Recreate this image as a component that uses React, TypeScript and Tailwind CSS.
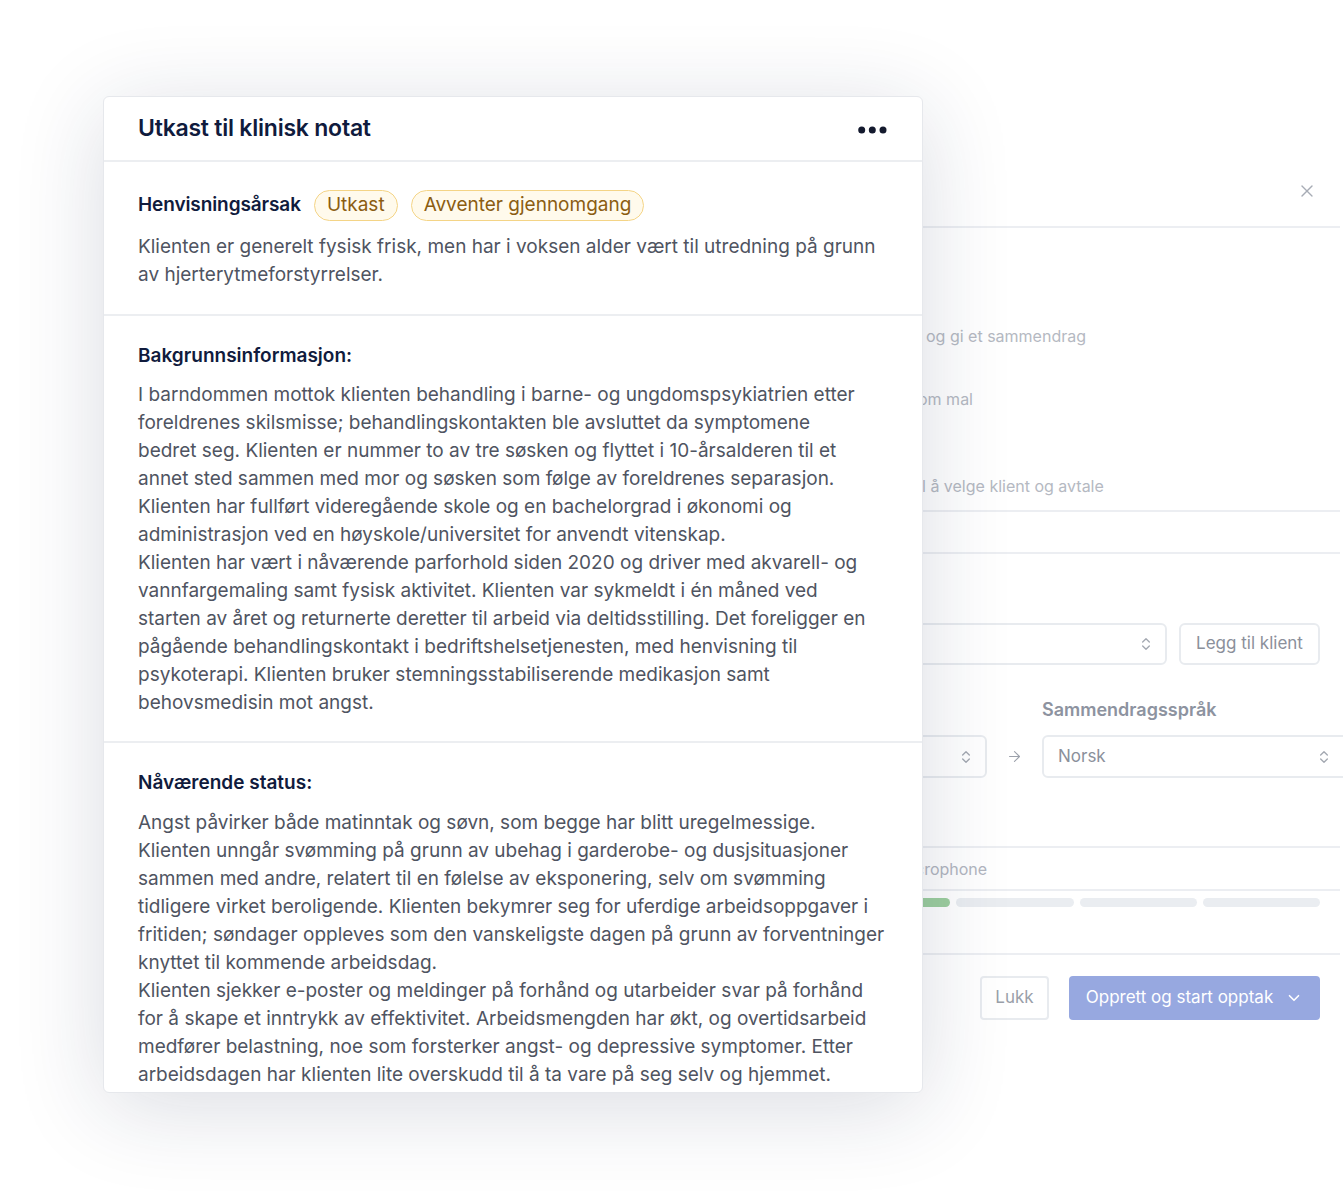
import { X, ChevronsUpDown, ArrowRight, ChevronDown } from 'lucide-react'

const REASON = [
  'Klienten er generelt fysisk frisk, men har i voksen alder vært til utredning på grunn',
  'av hjerterytmeforstyrrelser.',
]

const BACKGROUND = [
  'I barndommen mottok klienten behandling i barne- og ungdomspsykiatrien etter',
  'foreldrenes skilsmisse; behandlingskontakten ble avsluttet da symptomene',
  'bedret seg. Klienten er nummer to av tre søsken og flyttet i 10-årsalderen til et',
  'annet sted sammen med mor og søsken som følge av foreldrenes separasjon.',
  'Klienten har fullført videregående skole og en bachelorgrad i økonomi og',
  'administrasjon ved en høyskole/universitet for anvendt vitenskap.',
  'Klienten har vært i nåværende parforhold siden 2020 og driver med akvarell- og',
  'vannfargemaling samt fysisk aktivitet. Klienten var sykmeldt i én måned ved',
  'starten av året og returnerte deretter til arbeid via deltidsstilling. Det foreligger en',
  'pågående behandlingskontakt i bedriftshelsetjenesten, med henvisning til',
  'psykoterapi. Klienten bruker stemningsstabiliserende medikasjon samt',
  'behovsmedisin mot angst.',
]

const STATUS = [
  'Angst påvirker både matinntak og søvn, som begge har blitt uregelmessige.',
  'Klienten unngår svømming på grunn av ubehag i garderobe- og dusjsituasjoner',
  'sammen med andre, relatert til en følelse av eksponering, selv om svømming',
  'tidligere virket beroligende. Klienten bekymrer seg for uferdige arbeidsoppgaver i',
  'fritiden; søndager oppleves som den vanskeligste dagen på grunn av forventninger',
  'knyttet til kommende arbeidsdag.',
  'Klienten sjekker e-poster og meldinger på forhånd og utarbeider svar på forhånd',
  'for å skape et inntrykk av effektivitet. Arbeidsmengden har økt, og overtidsarbeid',
  'medfører belastning, noe som forsterker angst- og depressive symptomer. Etter',
  'arbeidsdagen har klienten lite overskudd til å ta vare på seg selv og hjemmet.',
]

function Lines({ lines }: { lines: string[] }) {
  return (
    <p className="whitespace-nowrap text-[19px] leading-[28px] text-[#4f5461]">
      {lines.map((l, i) => (
        <span key={i} className="block">{l}</span>
      ))}
    </p>
  )
}

function Badge({ children }: { children: React.ReactNode }) {
  return (
    <span className="flex h-[31px] items-center rounded-full border-[1.5px] border-[#f4d486] bg-[#fffaec] px-[12px] text-[19px] text-[#8b5d12]">
      {children}
    </span>
  )
}

function BackPanel() {
  return (
    <div className="ml-[813px] w-[527px] pt-[150px] font-['Inter',sans-serif]">
      {/* header */}
      <div className="flex h-[78px] justify-end border-b-2 border-[#eceef2] pr-[23px] pt-[31px]">
        <X size={20} strokeWidth={1.6} className="text-[#a7acb5]" />
      </div>

      <div className="px-[20px] text-[16px] leading-[24px] text-[#b5b9c2]">
        <div className="pl-[93px] pt-[96px]">og gi et sammendrag</div>
        <div className="pl-[85px] pt-[39px]">om mal</div>
        <div className="pl-[89px] pt-[63px]">l å velge klient og avtale</div>
      </div>
      <div className="mt-[12px] h-[44px] border-y-2 border-[#eceef2]" />

      <div className="px-[20px]">
        <div className="mt-[69px] flex gap-[12px]">
          <div className="flex h-[42px] flex-1 items-center justify-end rounded-md border-2 border-[#e8ebef] pr-[11px]">
            <ChevronsUpDown size={16} className="text-[#a3a8b1]" />
          </div>
          <div className="flex h-[42px] w-[141px] shrink-0 items-center justify-center rounded-md border-2 border-[#e8ebef] text-[17px] text-[#8b909b]">
            Legg til klient
          </div>
        </div>

        <div className="mt-[33px] flex items-end">
          <div className="flex w-[209px] shrink-0 items-center">
            <div className="flex h-[43px] flex-1 items-center justify-end rounded-md border-2 border-[#e8ebef] pr-[11px]">
              <ChevronsUpDown size={16} className="text-[#a3a8b1]" />
            </div>
            <div className="flex w-[55px] justify-center">
              <ArrowRight size={17} strokeWidth={1.6} className="text-[#9ca1ab]" />
            </div>
          </div>
          <div className="flex shrink-0 flex-col">
            <div className="text-[18px] font-semibold leading-[24px] text-[#8d93a0]">Sammendragsspråk</div>
            <div className="mt-[13px] flex h-[43px] w-[310px] items-center justify-between rounded-md border-2 border-[#e8ebef] pl-[14px] pr-[10px] text-[17px] text-[#8b909b]">
              Norsk
              <span className="mr-[8px]">
                <ChevronsUpDown size={16} className="text-[#a3a8b1]" />
              </span>
            </div>
          </div>
        </div>
      </div>

      <div className="mt-[68px] flex h-[45px] items-center border-y-2 border-[#eceef2] pl-[102px] text-[16px] text-[#b2b6bf]">
        crophone
      </div>

      <div className="px-[20px]">
        <div className="mt-[7px] flex gap-[6px]">
          <div className="h-[9px] flex-1 rounded-full bg-[#9dcf9f]" />
          <div className="h-[9px] flex-1 rounded-full bg-[#eaedf1]" />
          <div className="h-[9px] flex-1 rounded-full bg-[#eaedf1]" />
          <div className="h-[9px] flex-1 rounded-full bg-[#eaedf1]" />
        </div>
      </div>

      <div className="mt-[46px] border-t-2 border-[#eceef2]" />

      <div className="flex justify-end gap-[20px] px-[20px] pt-[21px]">
        <div className="flex h-[44px] w-[69px] items-center justify-center rounded-[4px] border-2 border-[#e8ebef] text-[17px] text-[#9a9fa9]">
          Lukk
        </div>
        <div className="flex h-[44px] w-[251px] items-center justify-center gap-[12px] rounded-[4px] bg-[#97a8e0] text-[17px] text-white">
          Opprett og start opptak
          <ChevronDown size={18} strokeWidth={2.2} />
        </div>
      </div>
    </div>
  )
}

function NoteCard() {
  return (
    <div className="absolute left-[103px] top-[96px] h-[997px] w-[820px] overflow-hidden rounded-md border border-[#e6e8ec] bg-white font-['Inter',sans-serif] shadow-[0_14px_90px_rgba(25,35,75,0.16)]">
      <div className="flex h-[65px] items-center justify-between border-b-2 border-[#eceef1] px-[34px]">
        <h1 className="text-[23px] font-semibold tracking-[-0.01em] text-[#101b3d]">Utkast til klinisk notat</h1>
        <svg width="30" height="8" viewBox="0 0 30 8" className="mt-[2px]">
          <circle cx="3.7" cy="4" r="3.5" fill="#141a2e" />
          <circle cx="14.3" cy="4" r="3.5" fill="#141a2e" />
          <circle cx="25" cy="4" r="3.5" fill="#141a2e" />
        </svg>
      </div>

      <section className="border-b-2 border-[#eceef1] px-[34px] pb-[25px] pt-[28px]">
        <div className="flex items-center">
          <h2 className="mr-[13px] text-[19px] font-semibold tracking-[-0.005em] text-[#101b3d]">Henvisningsårsak</h2>
          <div className="flex gap-[13px]">
            <Badge>Utkast</Badge>
            <Badge>Avventer gjennomgang</Badge>
          </div>
        </div>
        <div className="mt-[12px]">
          <Lines lines={REASON} />
        </div>
      </section>

      <section className="border-b-2 border-[#eceef1] px-[34px] pb-[24px] pt-[26px]">
        <h2 className="text-[19px] font-semibold leading-[28px] text-[#101b3d]">Bakgrunnsinformasjon:</h2>
        <div className="mt-[11px]">
          <Lines lines={BACKGROUND} />
        </div>
      </section>

      <section className="px-[34px] pt-[26px]">
        <h2 className="text-[19px] font-semibold leading-[28px] text-[#101b3d]">Nåværende status:</h2>
        <div className="mt-[12px]">
          <Lines lines={STATUS} />
        </div>
      </section>
    </div>
  )
}

export default function App() {
  return (
    <div className="relative h-[1203px] w-[1343px] overflow-hidden bg-white">
      <BackPanel />
      <NoteCard />
    </div>
  )
}
